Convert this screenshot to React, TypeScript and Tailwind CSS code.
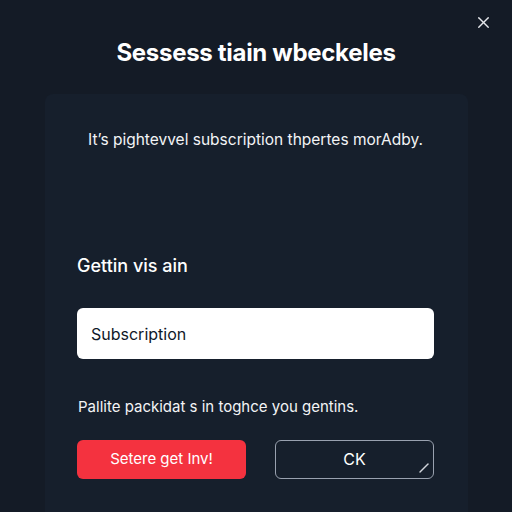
import React from 'react';
import { X } from 'lucide-react';

export default function App() {
  return (
    <div
      className="relative flex h-[512px] w-[512px] flex-col items-center overflow-hidden bg-[#141b26] text-white"
      style={{ fontFamily: 'Inter, "Noto Sans", sans-serif' }}
    >
      <button className="absolute right-[19px] top-[13px] text-gray-200">
        <X className="h-[19px] w-[19px]" strokeWidth={1.7} />
      </button>

      <h1 className="mt-[35px] text-[24px] font-bold tracking-[-0.3px] text-white">Sessess tiain wbeckeles</h1>

      <div className="ml-[1px] mt-[23px] flex w-[423px] flex-1 flex-col rounded-t-lg bg-[#161f2c] pl-[32px] pr-[34px]">
        <p className="mt-[34px] text-center text-[15.5px] text-gray-100">
          It’s pightevvel subscription thpertes morAdby.
        </p>

        <h2 className="mt-[101px] text-[18px] font-medium text-white">Gettin vis ain</h2>

        <div className="mt-[29px] flex h-[51px] items-center rounded-md bg-white px-[14px] text-[16px] text-gray-900">
          Subscription
        </div>

        <p className="ml-[1px] mt-[37px] text-[15px] text-gray-100">Pallite packidat s in toghce you gentins.</p>

        <div className="mt-[21px] flex gap-[29px]">
          <button className="flex h-[39px] w-[169px] items-center justify-center rounded-md bg-[#f4323f] text-[15px] text-white">
            Setere get Inv!
          </button>
          <button className="relative flex h-[39px] w-[159px] items-center justify-center rounded-md border border-gray-400 text-[16px] text-white">
            CK
            <svg className="absolute bottom-[5px] right-[4px]" width="10" height="10" viewBox="0 0 10 10">
              <path d="M1 9 L9 1" stroke="#d1d5db" strokeWidth="1.4" strokeLinecap="round" />
            </svg>
          </button>
        </div>
      </div>
    </div>
  );
}
